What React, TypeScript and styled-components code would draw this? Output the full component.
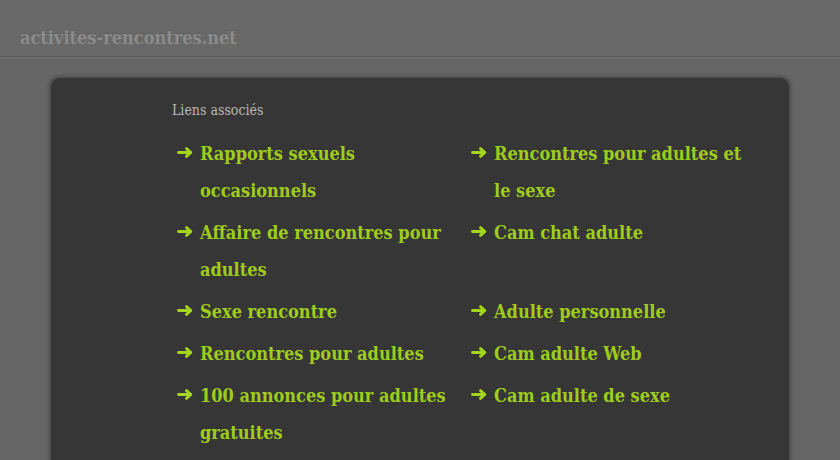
import styled, { createGlobalStyle } from 'styled-components';

const GlobalStyle = createGlobalStyle`
  html, body {
    margin: 0;
    padding: 0;
    background: #666666;
    overflow: hidden;
  }
  body {
    font-family: "DejaVu Serif Condensed", "DejaVu Serif", serif;
  }
`;

const Page = styled.div`
  width: 840px;
  height: 460px;
  overflow: hidden;
  background: #666666;
`;

const Header = styled.header`
  height: 57px;
  box-sizing: border-box;
  padding: 27px 0 0 20px;
  background: #696969;
  border-bottom: 1px solid #5a5a5a;
  box-shadow: 0 1px 0 #727272;
`;

const SiteName = styled.h1`
  margin: 0;
  font-size: 18px;
  font-weight: bold;
  line-height: 22px;
  color: #8c8c8c;
  text-shadow: 0 -1px 0 #5e5e5e;
`;

const Panel = styled.main`
  margin: 20px 0 0 50px;
  width: 740px;
  height: 420px;
  box-sizing: border-box;
  padding: 22px 0 0 121px;
  background: #363636;
  border: 1px solid #4e4e4e;
  border-radius: 10px;
  box-shadow: 0 0 3px 2px #555555;
`;

const Heading = styled.h2`
  margin: 0;
  font-size: 14px;
  line-height: 20px;
  font-weight: normal;
  color: #b8b8b8;
`;

const LinkGrid = styled.ul`
  list-style: none;
  margin: 15px 0 0;
  padding: 0;
  display: grid;
  grid-template-columns: 294px 294px;
  row-gap: 5px;
`;

const LinkItem = styled.li`
  display: flex;
  align-items: flex-start;
  padding-left: 5px;
`;

const ArrowIcon = styled.svg`
  flex: 0 0 auto;
  width: 16px;
  height: 11px;
  margin: 12px 7px 0 0;
`;

const LinkText = styled.a`
  width: 255px;
  font-size: 18px;
  font-weight: bold;
  line-height: 37px;
  color: #9fcc1c;
  text-decoration: none;
`;

const links = [
  'Rapports sexuels occasionnels',
  'Rencontres pour adultes et le sexe',
  'Affaire de rencontres pour adultes',
  'Cam chat adulte',
  'Sexe rencontre',
  'Adulte personnelle',
  'Rencontres pour adultes',
  'Cam adulte Web',
  '100 annonces pour adultes gratuites',
  'Cam adulte de sexe',
];

const Arrow = () => (
  <ArrowIcon viewBox="0 0 16 11" aria-hidden="true">
    <g fill="none" stroke="#a6d71f" strokeWidth="2.8" strokeLinecap="round" strokeLinejoin="round">
      <path d="M1.5 5.5 H13.5" />
      <path d="M9.5 1.6 L13.8 5.5 L9.5 9.4" />
    </g>
  </ArrowIcon>
);

export default function App() {
  return (
    <Page>
      <GlobalStyle />
      <Header>
        <SiteName>activites-rencontres.net</SiteName>
      </Header>
      <Panel>
        <Heading>Liens associés</Heading>
        <LinkGrid>
          {links.map((label) => (
            <LinkItem key={label}>
              <Arrow />
              <LinkText href="#">{label}</LinkText>
            </LinkItem>
          ))}
        </LinkGrid>
      </Panel>
    </Page>
  );
}
